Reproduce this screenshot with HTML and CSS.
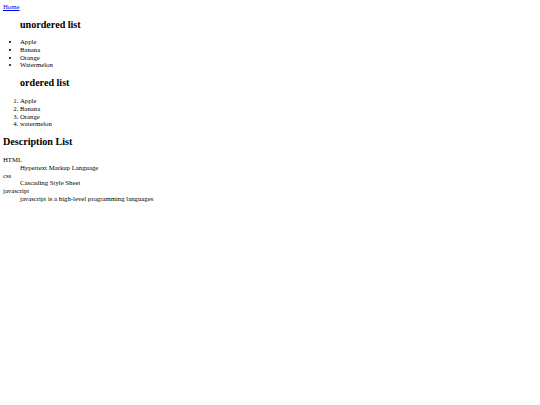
FILE: index.html
```html
<!DOCTYPE html>
<html>
<head>
<meta charset="utf-8">
<title>Lists</title>
<link rel="stylesheet" href="styles.css">
</head>
<body class="page">
<a class="home-link" href="#">Home</a>
<ul class="list">
  <h2 class="list-title">unordered list</h2>
  <li>Apple</li>
  <li>Banana</li>
  <li>Orange</li>
  <li>Watermelon</li>
</ul>
<ol class="list">
  <h2 class="list-title">ordered list</h2>
  <li>Apple</li>
  <li>Banana</li>
  <li>Orange</li>
  <li>watermelon</li>
</ol>
<h2 class="section-title">Description List</h2>
<dl class="desc">
  <dt>HTML</dt>
  <dd>Hypertext Markup Language</dd>
  <dt>css</dt>
  <dd>Cascading Style Sheet</dd>
  <dt>javascript</dt>
  <dd>javascript is a high-level programming languages</dd>
</dl>
</body>
</html>
```
FILE: styles.css
```css
html {
  background: #ffffff;
}
.page {
  margin: 2.5px 3px;
  font-family: "Liberation Serif", "Times New Roman", serif;
  font-size: 6.75px;
  line-height: 7.7px;
  color: #000000;
}
.home-link {
  color: #0000ee;
  text-decoration: underline;
}
.list {
  margin: 6.6px 0;
  padding-left: 17px;
}
.list-title,
.section-title {
  font-size: 10.1px;
  line-height: 11.5px;
  font-weight: bold;
  margin: 8.3px 0;
}
.desc {
  margin: 6.6px 0;
}
.desc dd {
  margin-left: 17px;
}
```
